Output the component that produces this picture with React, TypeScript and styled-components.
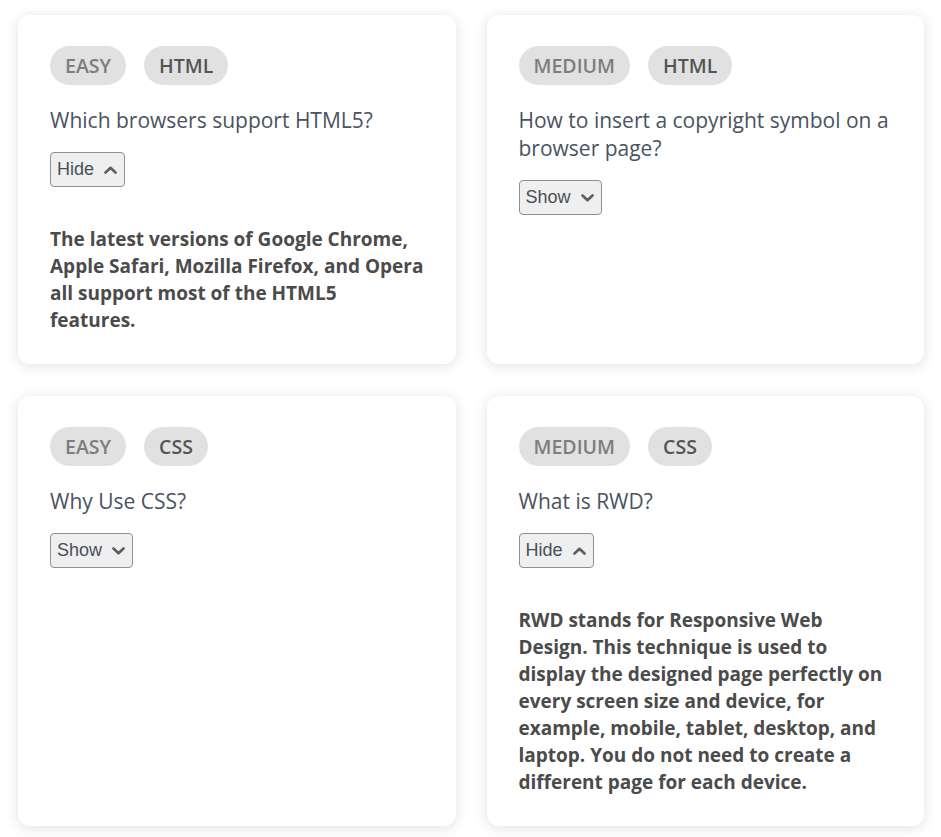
import React, { useState } from "react";
import styled, { createGlobalStyle } from "styled-components";

const Global = createGlobalStyle`
  html, body { margin: 0; padding: 0; background: #ffffff; }
  body { font-family: "Open Sans", "Noto Sans", sans-serif; }
  * { box-sizing: border-box; }
`;

const Grid = styled.div`
  display: grid;
  grid-template-columns: 1fr 1fr;
  gap: 32px 31px;
  padding: 15px 17px 12px 18px;
`;

const Card = styled.div`
  background: #ffffff;
  border-radius: 12px;
  box-shadow: 0 2px 14px rgba(0, 0, 0, 0.12);
  padding: 31px 32px 30px;
  display: flex;
  flex-direction: column;
  align-items: flex-start;
`;

const TagRow = styled.div`
  display: flex;
  gap: 18px;
`;

const Tag = styled.span<{ $kind: "level" | "topic" }>`
  display: inline-flex;
  align-items: center;
  height: 39px;
  padding: 0 15px;
  border-radius: 20px;
  background: #e1e1e1;
  font-size: 19.5px;
  font-weight: 600;
  color: ${(p) => (p.$kind === "level" ? "#7d7d7d" : "#545454")};
`;

const Question = styled.h3`
  margin: 21px 0 0;
  font-size: 21px;
  font-weight: 500;
  line-height: 28px;
  color: #4a5361;
`;

const Toggle = styled.button`
  margin-top: 18px;
  height: 35px;
  display: inline-flex;
  align-items: center;
  gap: 10px;
  padding: 0 7px 0 6px;
  border: 1px solid #8f8f8f;
  border-radius: 4px;
  background: #efefef;
  font-family: "Liberation Sans", Arial, sans-serif;
  font-size: 18px;
  color: #4a4f57;
  cursor: pointer;
`;

const Answer = styled.p`
  margin: 39px 0 0;
  font-size: 19px;
  font-weight: 700;
  line-height: 27px;
  color: #4b4b4b;
`;

const Chevron = ({ up }: { up: boolean }) => (
  <svg width="13" height="8" viewBox="0 0 13 8" aria-hidden="true">
    <polyline
      points={up ? "1.5,6.5 6.5,1.8 11.5,6.5" : "1.5,1.5 6.5,6.2 11.5,1.5"}
      fill="none"
      stroke="#5a5f66"
      strokeWidth="2.6"
      strokeLinecap="round"
      strokeLinejoin="round"
    />
  </svg>
);

type Item = {
  level: string;
  topic: string;
  q: string;
  a: string;
  open: boolean;
};

const items: Item[] = [
  {
    level: "EASY",
    topic: "HTML",
    q: "Which browsers support HTML5?",
    a: "The latest versions of Google Chrome, Apple Safari, Mozilla Firefox, and Opera all support most of the HTML5 features.",
    open: true,
  },
  {
    level: "MEDIUM",
    topic: "HTML",
    q: "How to insert a copyright symbol on a browser page?",
    a: "You can insert a copyright symbol by using &copy; or &#169; in an HTML file.",
    open: false,
  },
  {
    level: "EASY",
    topic: "CSS",
    q: "Why Use CSS?",
    a: "CSS is used to define styles for your web pages, including the design, layout and variations in display for different devices and screen sizes.",
    open: false,
  },
  {
    level: "MEDIUM",
    topic: "CSS",
    q: "What is RWD?",
    a: "RWD stands for Responsive Web Design. This technique is used to display the designed page perfectly on every screen size and device, for example, mobile, tablet, desktop, and laptop. You do not need to create a different page for each device.",
    open: true,
  },
];

const QuestionCard = ({ item }: { item: Item }) => {
  const [open, setOpen] = useState(item.open);
  return (
    <Card>
      <TagRow>
        <Tag $kind="level">{item.level}</Tag>
        <Tag $kind="topic">{item.topic}</Tag>
      </TagRow>
      <Question>{item.q}</Question>
      <Toggle onClick={() => setOpen(!open)}>
        {open ? "Hide" : "Show"}
        <Chevron up={open} />
      </Toggle>
      {open && <Answer>{item.a}</Answer>}
    </Card>
  );
};

export default function App() {
  return (
    <>
      <Global />
      <Grid>
        {items.map((it, i) => (
          <QuestionCard key={i} item={it} />
        ))}
      </Grid>
    </>
  );
}
